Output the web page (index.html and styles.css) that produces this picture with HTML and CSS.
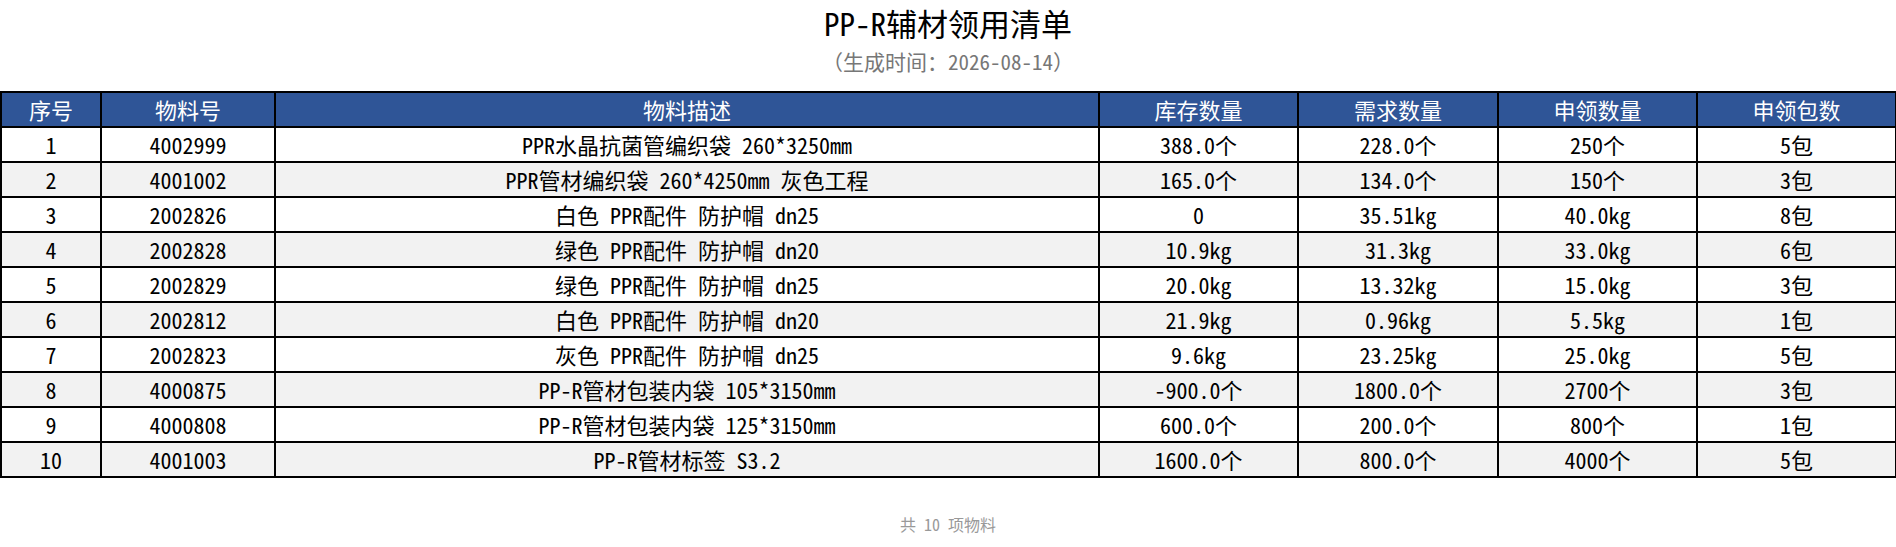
FILE: index.html
```html
<!DOCTYPE html>
<html lang="zh-CN">
<head>
<meta charset="utf-8">
<title>PP-R辅材领用清单</title>
<link rel="stylesheet" href="styles.css">
</head>
<body>
<div class="page">
  <h1 class="title">PP-R辅材领用清单</h1>
  <div class="subtitle">（生成时间：2026-08-14）</div>
  <table class="list">
    <colgroup>
      <col class="c-no"><col class="c-code"><col class="c-desc"><col class="c-q"><col class="c-q2"><col class="c-q"><col class="c-q">
    </colgroup>
    <thead>
      <tr><th>序号</th><th>物料号</th><th>物料描述</th><th>库存数量</th><th>需求数量</th><th>申领数量</th><th>申领包数</th></tr>
    </thead>
    <tbody>
      <tr><td>1</td><td>4002999</td><td>PPR水晶抗菌管编织袋 260*3250mm</td><td>388.0个</td><td>228.0个</td><td>250个</td><td>5包</td></tr>
      <tr><td>2</td><td>4001002</td><td>PPR管材编织袋 260*4250mm 灰色工程</td><td>165.0个</td><td>134.0个</td><td>150个</td><td>3包</td></tr>
      <tr><td>3</td><td>2002826</td><td>白色 PPR配件 防护帽 dn25</td><td>0</td><td>35.51kg</td><td>40.0kg</td><td>8包</td></tr>
      <tr><td>4</td><td>2002828</td><td>绿色 PPR配件 防护帽 dn20</td><td>10.9kg</td><td>31.3kg</td><td>33.0kg</td><td>6包</td></tr>
      <tr><td>5</td><td>2002829</td><td>绿色 PPR配件 防护帽 dn25</td><td>20.0kg</td><td>13.32kg</td><td>15.0kg</td><td>3包</td></tr>
      <tr><td>6</td><td>2002812</td><td>白色 PPR配件 防护帽 dn20</td><td>21.9kg</td><td>0.96kg</td><td>5.5kg</td><td>1包</td></tr>
      <tr><td>7</td><td>2002823</td><td>灰色 PPR配件 防护帽 dn25</td><td>9.6kg</td><td>23.25kg</td><td>25.0kg</td><td>5包</td></tr>
      <tr><td>8</td><td>4000875</td><td>PP-R管材包装内袋 105*3150mm</td><td>-900.0个</td><td>1800.0个</td><td>2700个</td><td>3包</td></tr>
      <tr><td>9</td><td>4000808</td><td>PP-R管材包装内袋 125*3150mm</td><td>600.0个</td><td>200.0个</td><td>800个</td><td>1包</td></tr>
      <tr><td>10</td><td>4001003</td><td>PP-R管材标签 S3.2</td><td>1600.0个</td><td>800.0个</td><td>4000个</td><td>5包</td></tr>
    </tbody>
  </table>
  <div class="footer">共 10 项物料</div>
</div>
</body>
</html>
```
FILE: styles.css
```css
html, body {
  margin: 0;
  padding: 0;
  background: #ffffff;
}
body {
  font-family: "Noto Sans Mono CJK SC", "Noto Sans CJK SC", "DejaVu Sans Mono", monospace;
  color: #000000;
}
.page {
  display: flex;
  flex-direction: column;
  align-items: stretch;
}
.title {
  margin: 0;
  padding-top: 6px;
  font-size: 31px;
  font-weight: normal;
  line-height: 34px;
  text-align: center;
  color: #000;
}
.subtitle {
  margin-top: 6px;
  font-size: 21px;
  line-height: 30px;
  text-align: center;
  color: #777777;
}
.list {
  margin-top: 15px;
  width: 1896px;
  border-collapse: collapse;
  table-layout: fixed;
  font-size: 22px;
}
.c-no { width: 100px; }
.c-code { width: 174px; }
.c-desc { width: 824px; }
.c-q { width: 199px; }
.c-q2 { width: 200px; }
.list th, .list td {
  border: 2px solid #000;
  height: 33px;
  padding: 0;
  text-align: center;
  vertical-align: middle;
  line-height: 33px;
  white-space: nowrap;
}
.list th {
  background: #2f5597;
  color: #ffffff;
  font-weight: normal;
}
.list tbody tr:nth-child(even) td {
  background: #f2f2f2;
}
.footer {
  margin-top: 36px;
  font-size: 16px;
  line-height: 20px;
  text-align: center;
  color: #999999;
}
```
